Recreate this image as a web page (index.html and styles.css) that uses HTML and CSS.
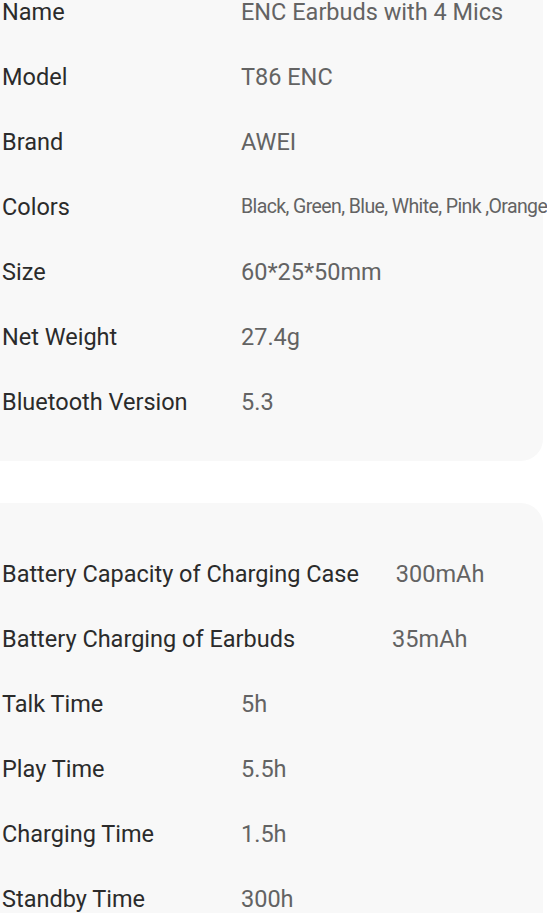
FILE: index.html
```html
<!DOCTYPE html>
<html>
<head>
<meta charset="utf-8">
<link rel="stylesheet" href="styles.css">
</head>
<body>
<div class="page">
  <section class="card card-top">
    <div class="row"><span class="label">Name</span><span class="value">ENC Earbuds with 4 Mics</span></div>
    <div class="row"><span class="label">Model</span><span class="value">T86 ENC</span></div>
    <div class="row"><span class="label">Brand</span><span class="value">AWEI</span></div>
    <div class="row"><span class="label">Colors</span><span class="value small">Black, Green, Blue, White, Pink ,Orange</span></div>
    <div class="row"><span class="label">Size</span><span class="value">60*25*50mm</span></div>
    <div class="row"><span class="label">Net Weight</span><span class="value">27.4g</span></div>
    <div class="row"><span class="label">Bluetooth Version</span><span class="value">5.3</span></div>
  </section>
  <section class="card card-bottom">
    <div class="row wide"><span class="label">Battery Capacity of Charging Case</span><span class="value cap">300mAh</span></div>
    <div class="row wide"><span class="label">Battery Charging of Earbuds</span><span class="value bud">35mAh</span></div>
    <div class="row"><span class="label">Talk Time</span><span class="value">5h</span></div>
    <div class="row"><span class="label">Play Time</span><span class="value">5.5h</span></div>
    <div class="row"><span class="label">Charging Time</span><span class="value">1.5h</span></div>
    <div class="row"><span class="label">Standby Time</span><span class="value">300h</span></div>
  </section>
</div>
</body>
</html>
```
FILE: styles.css
```css
html, body {
  margin: 0;
  padding: 0;
  background: #ffffff;
}
body {
  font-family: Roboto, "Liberation Sans", sans-serif;
  overflow: hidden;
}
.page {
  display: flex;
  flex-direction: column;
  gap: 42px;
  width: 543px;
}
.card {
  background: #f8f8f8;
  display: flex;
  flex-direction: column;
  gap: 43px;
  padding-left: 2px;
}
.card-top {
  padding-top: 1px;
  padding-bottom: 48px;
  border-bottom-right-radius: 22px;
}
.card-bottom {
  padding-top: 60px;
  padding-bottom: 40px;
  border-top-right-radius: 22px;
}
.row {
  display: grid;
  grid-template-columns: 239px 1fr;
  line-height: 22px;
  font-size: 23.5px;
  white-space: nowrap;
}
.row.wide {
  display: flex;
}
.label {
  color: #2b2b2b;
}
.value {
  color: #636363;
}
.value.small {
  font-size: 19.5px;
  letter-spacing: -0.6px;
}
.value.cap {
  margin-left: 37px;
}
.value.bud {
  margin-left: 97px;
}
```
